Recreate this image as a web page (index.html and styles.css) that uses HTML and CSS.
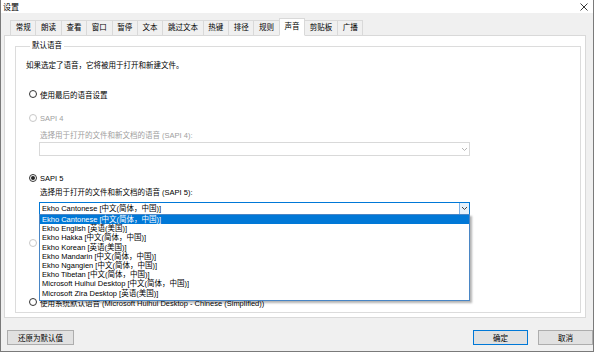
FILE: index.html
```html
<!DOCTYPE html>
<html>
<head>
  <meta charset="utf-8">
  <title>设置</title>
  <link rel="stylesheet" href="styles.css">
</head>
<body>
  <div class="window">
    <div class="titlebar">
      <span class="title">设置</span>
      <svg class="close" width="8" height="8" viewBox="0 0 8 8">
        <path d="M0.5 0.5 L7.5 7.5 M7.5 0.5 L0.5 7.5" stroke="#222" stroke-width="0.9" fill="none"/>
      </svg>
    </div>

    <div class="main">
      <div class="tabs">
        <span class="tab">常规</span>
        <span class="tab">朗读</span>
        <span class="tab">查看</span>
        <span class="tab">窗口</span>
        <span class="tab">暂停</span>
        <span class="tab">文本</span>
        <span class="tab">跳过文本</span>
        <span class="tab">热键</span>
        <span class="tab">排径</span>
        <span class="tab">规则</span>
        <span class="tab active">声音</span>
        <span class="tab">剪贴板</span>
        <span class="tab">广播</span>
      </div>

      <div class="panel">
        <fieldset class="group">
          <legend>默认语音</legend>
          <p class="intro">如果选定了语音，它将被用于打开和新建文件。</p>

          <div class="radio r-last"><span class="dot"></span>使用最后的语音设置</div>

          <div class="radio r-sapi4 disabled"><span class="dot"></span>SAPI 4</div>
          <div class="caption c-sapi4 disabled">选择用于打开的文件和新文档的语音 (SAPI 4):</div>
          <div class="combo off">
            <span class="value"></span>
            <span class="arrow">
              <svg width="7" height="5" viewBox="0 0 7 5"><path d="M1 1 L3.5 3.5 L6 1" stroke="#b5b5b5" fill="none"/></svg>
            </span>
          </div>

          <div class="radio r-sapi5 checked"><span class="dot"></span>SAPI 5</div>
          <div class="caption c-sapi5">选择用于打开的文件和新文档的语音 (SAPI 5):</div>
          <div class="combo focus">
            <span class="value">Ekho Cantonese [中文(简体，中国)]</span>
            <span class="arrow">
              <svg width="7" height="5" viewBox="0 0 7 5"><path d="M1 1 L3.5 3.5 L6 1" stroke="#444" fill="none"/></svg>
            </span>
            <ul class="list">
              <li class="selected">Ekho Cantonese [中文(简体，中国)]</li>
              <li>Ekho English [英语(美国)]</li>
              <li>Ekho Hakka [中文(简体，中国)]</li>
              <li>Ekho Korean [英语(美国)]</li>
              <li>Ekho Mandarin [中文(简体，中国)]</li>
              <li>Ekho Ngangien [中文(简体，中国)]</li>
              <li>Ekho Tibetan [中文(简体，中国)]</li>
              <li>Microsoft Huihui Desktop [中文(简体，中国)]</li>
              <li>Microsoft Zira Desktop [英语(美国)]</li>
            </ul>
          </div>

          <div class="radio r-other disabled"><span class="dot"></span></div>
          <div class="radio r-system"><span class="dot"></span>使用系统默认语音 (Microsoft Huihui Desktop - Chinese (Simplified))</div>
        </fieldset>
      </div>
    </div>

    <div class="footer">
      <button class="btn reset">还原为默认值</button>
      <span class="spacer"></span>
      <button class="btn ok">确定</button>
      <button class="btn">取消</button>
    </div>
  </div>
</body>
</html>
```

FILE: styles.css
```css
body {
  margin: 0;
  background-color: #ffffff;
  font-family: "Liberation Sans", "Noto Sans CJK SC", sans-serif;
  font-size: 7.5px;
  color: #000;
}

.window {
  width: 594px;
  height: 352px;
  box-sizing: border-box;
  border: 1px solid #7a7a7a;
  border-top: none;
  background-color: #f0f0f0;
  display: flex;
  flex-direction: column;
}

.titlebar {
  height: 16px;
  background-color: #fff;
  display: flex;
  align-items: center;
  padding: 0 4px 0 2px;
}

.title {
  font-size: 8px;
  flex: 1;
}

.close {
  margin-right: 1px;
}

.main {
  padding: 0 7px 0 3px;
}

/* tab strip */
.tabs {
  display: flex;
  align-items: flex-end;
  margin: 5px 0 -1px 6px;
  position: relative;
  z-index: 1;
}

.tab {
  height: 14px;
  line-height: 13px;
  padding: 0 4.7px;
  border: 1px solid #d9d9d9;
  border-left: none;
  background-color: #f0f0f0;
}

.tab:first-child {
  border-left: 1px solid #d9d9d9;
}

.tab.active {
  height: 16px;
  line-height: 15px;
  background-color: #fff;
  border-bottom-color: #fff;
  border-left: 1px solid #d9d9d9;
  margin-left: -1px;
}

.panel {
  background-color: #fff;
  border: 1px solid #d9d9d9;
  padding: 5px 4px 4px 10px;
}

.group {
  margin: 0;
  padding: 10px 10px 5px 10px;
  border: 1px solid #dcdcdc;
  min-width: 0;
}

.group legend {
  padding: 0 2px;
  margin-left: 4px;
  line-height: 10px;
}

.intro {
  margin: 0;
  line-height: 10px;
}

/* radio buttons */
.radio {
  display: flex;
  align-items: center;
  gap: 3px;
  height: 10px;
  margin-left: 3px;
  white-space: nowrap;
}

.dot {
  width: 8px;
  height: 8px;
  box-sizing: border-box;
  border: 1px solid #333;
  border-radius: 50%;
  background-color: #fff;
  display: flex;
  align-items: center;
  justify-content: center;
  flex: none;
}

.radio.checked .dot::after {
  content: "";
  width: 4px;
  height: 4px;
  border-radius: 50%;
  background-color: #222;
}

.radio.disabled .dot {
  border-color: #c8c8c8;
}

.disabled {
  color: #a0a0a0;
}

.caption {
  line-height: 10px;
  margin-left: 14px;
  white-space: nowrap;
}

.r-last { margin-top: 18px; }
.r-sapi4 { margin-top: 14px; }
.c-sapi4 { margin-top: 8px; }
.r-sapi5 { margin-top: 17px; }
.c-sapi5 { margin-top: 5px; }
.r-other { margin-top: 23px; }
.r-system { margin-top: 49px; }

/* combo boxes */
.combo {
  position: relative;
  width: 431px;
  margin-left: 13px;
  box-sizing: border-box;
  display: flex;
  align-items: stretch;
  background-color: #fff;
}

.combo.off {
  height: 14px;
  margin-top: 1px;
  border: 1px solid #d9d9d9;
}

.combo.focus {
  height: 13px;
  margin-top: 4px;
  border: 1px solid #0078d7;
}

.combo .value {
  flex: 1;
  padding-left: 2px;
  line-height: 11px;
  white-space: nowrap;
}

.combo .arrow {
  width: 9px;
  display: flex;
  align-items: center;
  justify-content: center;
}

.combo.focus .arrow {
  background-color: #e5f1fb;
  border-left: 1px solid #7eb4ea;
}

.list {
  position: absolute;
  top: 100%;
  left: -1px;
  width: 431px;
  box-sizing: border-box;
  margin: 0;
  padding: 0 0 2px;
  list-style: none;
  background-color: #fff;
  border: 1px solid #4a86c5;
  box-shadow: 2px 2px 2px rgba(0, 0, 0, 0.3);
  z-index: 2;
}

.list li {
  height: 9.2px;
  line-height: 9.2px;
  padding-left: 2px;
  white-space: nowrap;
}

.list li.selected {
  background-color: #0078d7;
  color: #fff;
}

/* bottom buttons */
.footer {
  display: flex;
  padding: 12px 0 6px 6px;
}

.spacer {
  flex: 1;
}

.btn {
  height: 15px;
  padding: 0;
  font-family: inherit;
  font-size: 7.5px;
  color: #000;
  background-color: #e1e1e1;
  border: 1px solid #adadad;
}

.btn.reset {
  width: 67px;
}

.btn.ok,
.btn + .btn {
  width: 55px;
}

.btn + .btn {
  margin-left: 10px;
}

.btn.ok {
  border-color: #0078d7;
}
```
